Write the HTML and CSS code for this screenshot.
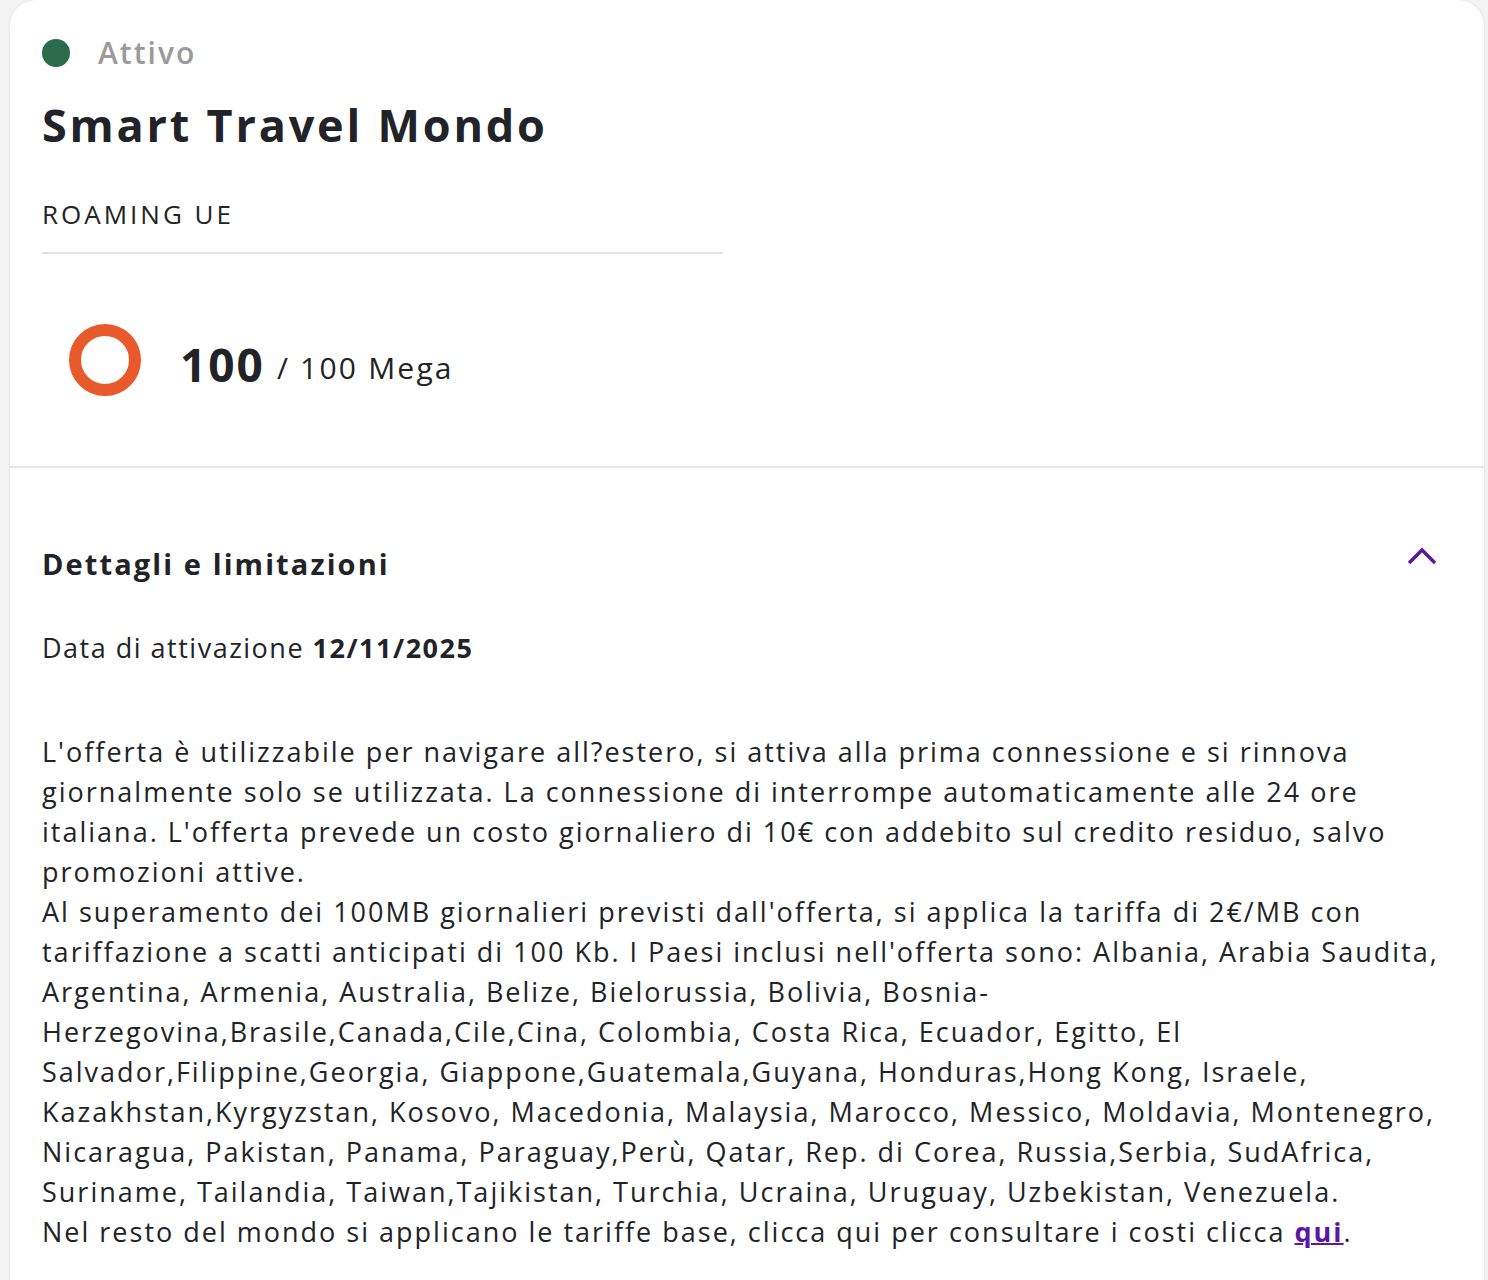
FILE: index.html
```html
<!DOCTYPE html>
<html lang="it">
<head>
<meta charset="utf-8">
<title>Smart Travel Mondo</title>
<link rel="stylesheet" href="styles.css">
</head>
<body>
<div class="card">
  <section class="top">
    <div class="status"><span class="dot"></span><span class="status-label">Attivo</span></div>
    <h1 class="title">Smart Travel Mondo</h1>
    <div class="category">ROAMING UE</div>
    <div class="divider"></div>
    <div class="usage">
      <svg class="ring" width="72" height="72" viewBox="0 0 72 72"><circle cx="36" cy="36" r="30" fill="none" stroke="#e85a2c" stroke-width="12"/></svg>
      <div class="amount"><span class="amount-big">100</span><span class="amount-total">/ 100 Mega</span></div>
    </div>
  </section>
  <section class="details">
    <div class="details-head">
      <h2 class="details-title">Dettagli e limitazioni</h2>
      <svg class="chevron" width="30" height="18" viewBox="0 0 30 18"><polyline points="2,16 15,3 28,16" fill="none" stroke="#5a17a6" stroke-width="3.4"/></svg>
    </div>
    <p class="activation">Data di attivazione <strong>12/11/2025</strong></p>
    <p class="desc">L'offerta è utilizzabile per navigare all?estero, si attiva alla prima connessione e si rinnova<br>giornalmente solo se utilizzata. La connessione di interrompe automaticamente alle 24 ore<br>italiana. L'offerta prevede un costo giornaliero di 10€ con addebito sul credito residuo, salvo<br>promozioni attive.<br>Al superamento dei 100MB giornalieri previsti dall'offerta, si applica la tariffa di 2€/MB con<br>tariffazione a scatti anticipati di 100 Kb. I Paesi inclusi nell'offerta sono: Albania, Arabia Saudita,<br>Argentina, Armenia, Australia, Belize, Bielorussia, Bolivia, Bosnia-<br>Herzegovina,Brasile,Canada,Cile,Cina, Colombia, Costa Rica, Ecuador, Egitto, El<br>Salvador,Filippine,Georgia, Giappone,Guatemala,Guyana, Honduras,Hong Kong, Israele,<br>Kazakhstan,Kyrgyzstan, Kosovo, Macedonia, Malaysia, Marocco, Messico, Moldavia, Montenegro,<br>Nicaragua, Pakistan, Panama, Paraguay,Perù, Qatar, Rep. di Corea, Russia,Serbia, SudAfrica,<br>Suriname, Tailandia, Taiwan,Tajikistan, Turchia, Ucraina, Uruguay, Uzbekistan, Venezuela.<br>Nel resto del mondo si applicano le tariffe base, clicca qui per consultare i costi clicca <a class="link" href="#">qui</a>.</p>
  </section>
</div>
</body>
</html>
```
FILE: styles.css
```css
html, body {
  margin: 0;
  padding: 0;
}
body {
  background: #f3f3f3;
  font-family: "Open Sans", "Noto Sans", sans-serif;
  color: #222326;
  height: 1280px;
  overflow: hidden;
}
.card {
  margin-left: 10px;
  width: 1474px;
  background: #ffffff;
  border-radius: 26px 26px 0 0;
  box-shadow: 0 0 3px rgba(0, 0, 0, 0.10);
  min-height: 1300px;
}
.top {
  padding: 35px 32px 70px 32px;
  border-bottom: 2px solid #e6e6e6;
}
.status {
  display: flex;
  align-items: center;
  height: 36px;
}
.dot {
  width: 28px;
  height: 28px;
  border-radius: 50%;
  background: #2b6a4d;
  margin-right: 28px;
}
.status-label {
  font-size: 30px;
  font-weight: 600;
  color: #9a9a9c;
  line-height: 36px;
  letter-spacing: 2px;
}
.title {
  margin: 26px 0 0 0;
  font-size: 45px;
  font-weight: 700;
  line-height: 56px;
  color: #222328;
  letter-spacing: 2.8px;
}
.category {
  margin-top: 45px;
  font-size: 26px;
  line-height: 32px;
  color: #222326;
  letter-spacing: 3px;
}
.divider {
  margin-top: 22px;
  width: 681px;
  height: 2px;
  background: #e3e3e3;
}
.usage {
  margin-top: 70px;
  display: flex;
  align-items: center;
  padding-left: 27px;
  height: 72px;
}
.ring {
  display: block;
  margin-right: 39px;
}
.amount {
  display: flex;
  align-items: center;
  margin-top: 8px;
}
.amount-big {
  font-size: 46px;
  font-weight: 700;
  color: #222328;
  letter-spacing: 2px;
}
.amount-total {
  font-size: 30px;
  margin-left: 12px;
  margin-top: 6px;
  color: #222326;
  letter-spacing: 2.2px;
}
.details {
  padding: 76px 47px 0 32px;
}
.details-head {
  display: flex;
  align-items: center;
  justify-content: space-between;
  height: 40px;
}
.details-title {
  margin: 0;
  font-size: 29px;
  font-weight: 700;
  line-height: 40px;
  letter-spacing: 2.1px;
}
.chevron {
  display: block;
  margin-top: -16px;
}
.activation {
  margin: 44px 0 0 0;
  font-size: 27px;
  line-height: 40px;
  letter-spacing: 1.5px;
}
.activation strong {
  font-weight: 700;
}
.desc {
  margin: 64px 0 0 0;
  font-size: 27px;
  line-height: 40px;
  white-space: nowrap;
  letter-spacing: 2px;
}
.link {
  color: #5a17a6;
  font-weight: 700;
  text-decoration: underline;
  text-decoration-thickness: 2px;
}
```
